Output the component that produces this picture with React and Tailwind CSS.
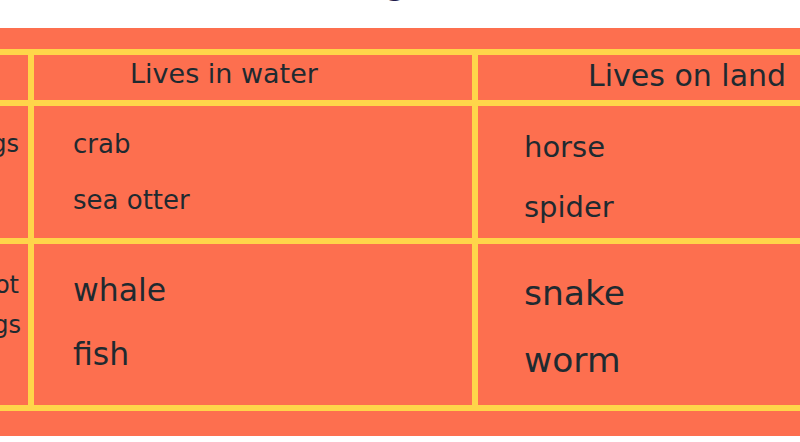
export default function App() {
  const font = { fontFamily: '"DejaVu Sans", "Noto Sans", sans-serif' };
  return (
    <div className="w-[800px] h-[442px] overflow-hidden bg-white text-[#1f2a30]" style={font}>
      <div className="h-[28px] overflow-hidden flex justify-start">
        <div className="ml-[278px] mt-[-40px] text-[36px] leading-[44px] text-[#1e1b4b]">Sorting</div>
      </div>
      <div className="bg-[#fd6f4f] pt-[21px] pb-[25px]">
        <div className="bg-[#ffd54a] py-[6px] ml-[-172px] w-[1060px]">
          <div className="grid grid-cols-[200px_438px_416px] grid-rows-[45px_132px_161px] gap-[6px]">
            <div className="bg-[#fd6f4f]"></div>
            <div className="bg-[#fd6f4f] pl-[96px] pt-[2px] text-[27px] leading-[34px]">Lives in water</div>
            <div className="bg-[#fd6f4f] pl-[110px] pt-[3px] text-[30px] leading-[36px]">Lives on land</div>

            <div className="bg-[#fd6f4f] flex justify-end items-start pr-[9px] pt-[22px] text-[24px] leading-[32px] whitespace-nowrap">
              <span>Has legs</span>
            </div>
            <div className="bg-[#fd6f4f] pl-[39px] pt-[22px] text-[26px] leading-[32px] flex flex-col gap-[24px]">
              <span>crab</span>
              <span>sea otter</span>
            </div>
            <div className="bg-[#fd6f4f] pl-[46px] pt-[23px] text-[29px] leading-[36px] flex flex-col gap-[24px]">
              <span>horse</span>
              <span>spider</span>
            </div>

            <div className="bg-[#fd6f4f] flex flex-col items-end pr-[7px] pt-[21px] text-[24px] leading-[40px] whitespace-nowrap">
              <span className="mr-[2px]">Does not</span>
              <span>have legs</span>
            </div>
            <div className="bg-[#fd6f4f] pl-[39px] pt-[26px] text-[31.5px] leading-[40px] flex flex-col gap-[24px]">
              <span>whale</span>
              <span>fish</span>
            </div>
            <div className="bg-[#fd6f4f] pl-[46px] pt-[28px] text-[34.5px] leading-[42px] flex flex-col gap-[25px]">
              <span>snake</span>
              <span>worm</span>
            </div>
          </div>
        </div>
      </div>
    </div>
  );
}
